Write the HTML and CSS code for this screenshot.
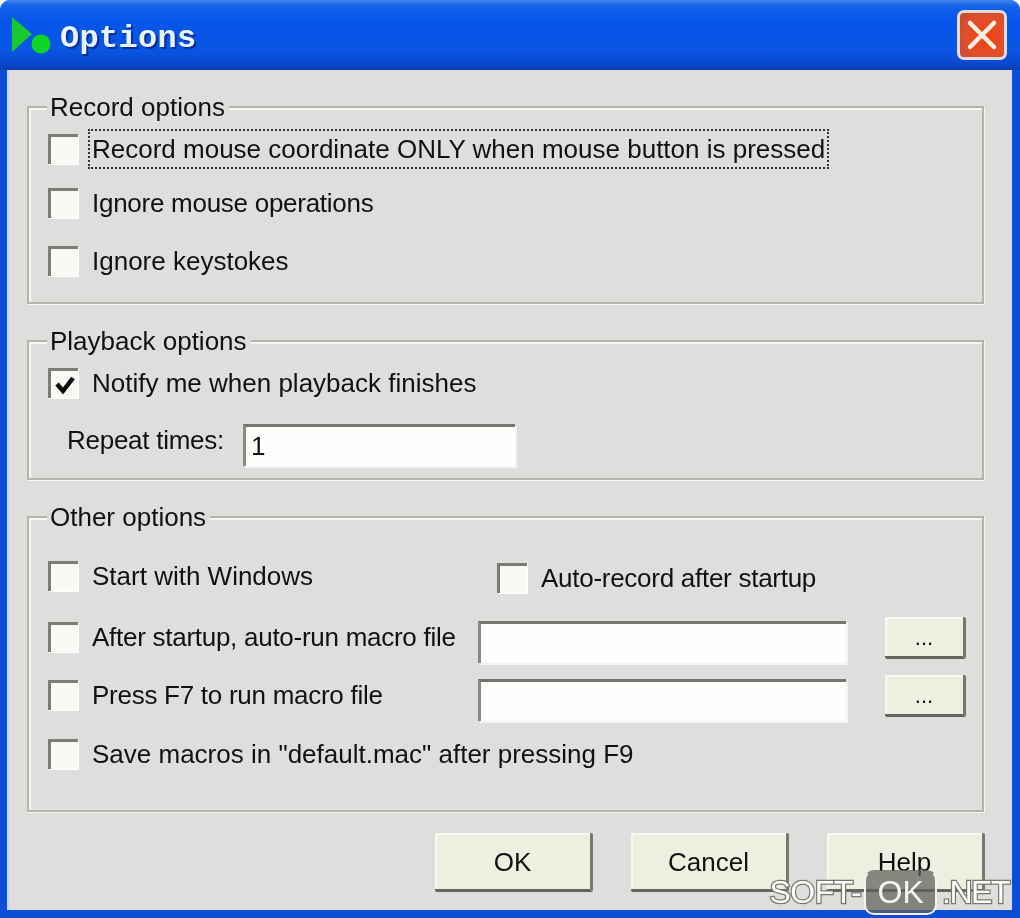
FILE: index.html
```html
<!DOCTYPE html>
<html lang="en">
<head>
  <meta charset="UTF-8">
  <title>Options</title>
  <link rel="stylesheet" href="styles.css">
</head>
<body>
  <div class="window">
    <div class="titlebar">
      <svg class="app-icon" width="40" height="40" viewBox="0 0 40 40">
        <polygon points="0,1 20,18 0,36" fill="#17c92c"/>
        <circle cx="29" cy="28" r="9.5" fill="#0fd625"/>
      </svg>
      <span class="title">Options</span>
      <div class="close">
        <svg width="34" height="34" viewBox="0 0 34 34">
          <path d="M5 5 L29 29 M29 5 L5 29" stroke="#fdeee4" stroke-width="4.5" stroke-linecap="round"/>
        </svg>
      </div>
    </div>

    <div class="client">
      <div class="group group-record">
        <div class="group-title">Record options</div>
        <div class="row">
          <span class="check"></span>
          <span class="label focused">Record mouse coordinate ONLY when mouse button is pressed</span>
        </div>
        <div class="row mt-14">
          <span class="check"></span>
          <span class="label tight">Ignore mouse operations</span>
        </div>
        <div class="row mt-18">
          <span class="check"></span>
          <span class="label">Ignore keystokes</span>
        </div>
      </div>

      <div class="group group-playback">
        <div class="group-title">Playback options</div>
        <div class="row">
          <span class="check">
            <svg width="24" height="24" viewBox="0 0 24 24">
              <path d="M4 11 L10 18 L20 5" fill="none" stroke="#0c0c0c" stroke-width="4.5"/>
            </svg>
          </span>
          <span class="label">Notify me when playback finishes</span>
        </div>
        <div class="row mt-17">
          <span class="label repeat-label tight">Repeat times:</span>
          <input class="field repeat-field" type="text" value="1">
        </div>
      </div>

      <div class="group group-other">
        <div class="group-title">Other options</div>
        <div class="row">
          <div class="cell-start">
            <span class="check"></span>
            <span class="label">Start with Windows</span>
          </div>
          <div class="cell-auto">
            <span class="check"></span>
            <span class="label tight">Auto-record after startup</span>
          </div>
        </div>
        <div class="row mt-21">
          <span class="check"></span>
          <span class="label file-label tight">After startup, auto-run macro file</span>
          <input class="field file-field" type="text">
          <button class="btn btn-small">...</button>
        </div>
        <div class="row mt-18">
          <span class="check"></span>
          <span class="label file-label tight">Press F7 to run macro file</span>
          <input class="field file-field" type="text">
          <button class="btn btn-small">...</button>
        </div>
        <div class="row mt-19">
          <span class="check"></span>
          <span class="label">Save macros in "default.mac" after pressing F9</span>
        </div>
      </div>

      <div class="actions">
        <button class="btn">OK</button>
        <button class="btn">Cancel</button>
        <button class="btn">Help</button>
      </div>
    </div>

    <div class="watermark">
      <span class="wm-text wm-soft">SOFT-</span><span class="wm-ok">OK</span><span class="wm-text wm-net">.NET</span>
    </div>
  </div>
</body>
</html>
```

FILE: styles.css
```css
html, body {
  margin: 0;
  padding: 0;
}
body {
  width: 1020px;
  height: 918px;
  overflow: hidden;
  font-family: "Liberation Sans", Arial, sans-serif;
  font-size: 26px;
  color: #111;
}
.window {
  position: relative;
  width: 1020px;
  height: 918px;
  background: #0b4fd6;
  border-radius: 10px 10px 0 0;
  overflow: hidden;
  filter: blur(0.6px);
}

/* title bar */
.titlebar {
  position: relative;
  height: 70px;
  box-sizing: border-box;
  padding: 0 13px 0 12px;
  display: flex;
  align-items: center;
  background: linear-gradient(#3f86ee 0, #1463e8 6px, #0656ea 20px, #0a55e4 50px, #0a4ad2 62px, #0b3fb4 70px);
}
.app-icon {
  flex: none;
  margin-top: 2px;
}
.title {
  margin: 6px 0 0 8px;
  font-family: "Liberation Mono", monospace;
  font-weight: bold;
  font-size: 32px;
  letter-spacing: 0.3px;
  color: #e8f6ff;
  text-shadow: 2px 2px 1px #0a2f90;
}
.close {
  margin: -1px 0 0 auto;
  width: 50px;
  height: 50px;
  box-sizing: border-box;
  display: flex;
  align-items: center;
  justify-content: center;
  border: 3px solid #e4dcdc;
  border-radius: 7px;
  background: radial-gradient(circle at 60% 55%, #f2400f 0, #e0502c 55%, #c9482f 100%);
}

/* client area */
.client {
  height: 840px;
  box-sizing: border-box;
  margin: 0 8px 0 7px;
  padding: 36px 28px 0 20px;
  background: #dedfdc;
  box-shadow: inset 2px 0 0 #c4d6ef, inset -2px 0 0 #d5dcea;
}
.group {
  position: relative;
  box-sizing: border-box;
  margin-bottom: 36px;
  padding-left: 19px;
  border: 2px solid #b4b4ad;
  box-shadow: inset 2px 2px 0 #f6f6f2, 1px 1px 0 #f6f6f2;
}
.group-record {
  height: 198px;
  padding-top: 21px;
}
.group-playback {
  height: 140px;
  padding-top: 21px;
}
.group-other {
  height: 296px;
  padding-top: 38px;
  margin-bottom: 21px;
}
.group-title {
  position: absolute;
  top: -17px;
  left: 18px;
  padding: 0 4px 0 3px;
  background: #dedfdc;
  line-height: 32px;
}

/* rows */
.row {
  display: flex;
  align-items: center;
  height: 40px;
}
.mt-14 { margin-top: 14px; }
.mt-17 { margin-top: 17px; }
.mt-18 { margin-top: 18px; }
.mt-19 { margin-top: 19px; }
.mt-21 { margin-top: 21px; }

.check {
  flex: none;
  width: 30px;
  height: 30px;
  box-sizing: border-box;
  display: flex;
  align-items: center;
  justify-content: center;
  border-top: 3px solid #7c7c76;
  border-left: 3px solid #7c7c76;
  background: #f9f9f6;
  box-shadow: 1px 1px 0 #fff;
}
.label {
  margin-left: 14px;
  white-space: nowrap;
}
.tight {
  letter-spacing: -0.27px;
}
.focused {
  outline: 2px dotted #333;
  outline-offset: 2px;
  line-height: 32px;
}
.repeat-label {
  width: 156px;
  margin-left: 19px;
}
.cell-start {
  display: flex;
  align-items: center;
  width: 449px;
}
.cell-auto {
  display: flex;
  align-items: center;
  margin-top: 4px;
}
.file-label {
  width: 386px;
}

/* inputs and buttons */
.field {
  box-sizing: border-box;
  height: 42px;
  margin: 9px 0 0;
  padding: 0 0 0 5px;
  border: 0;
  border-top: 3px solid #767670;
  border-left: 3px solid #8a8a84;
  border-radius: 0;
  background: #fefefc;
  box-shadow: 2px 2px 0 #f4f4f0;
  font: inherit;
  color: #111;
}
.repeat-field {
  width: 272px;
  margin-left: 20px;
}
.file-field {
  width: 368px;
}
.btn {
  box-sizing: border-box;
  width: 158px;
  height: 59px;
  padding: 2px 0 0;
  border: 0;
  border-right: 3px solid #77776f;
  border-bottom: 3px solid #66665f;
  border-radius: 2px;
  background: #eeeee1;
  box-shadow: inset 2px 2px 0 #f8f8f0;
  font: inherit;
  color: #111;
}
.btn-small {
  width: 81px;
  height: 42px;
  margin-left: 39px;
  margin-top: 2px;
  font-size: 22px;
}
.actions {
  display: flex;
  justify-content: flex-end;
  gap: 38px;
  margin-right: -1px;
}

/* watermark */
.watermark {
  position: absolute;
  right: 11px;
  bottom: 3px;
  display: flex;
  align-items: center;
  font-size: 32px;
}
.wm-text {
  color: #fff;
  -webkit-text-stroke: 2.5px #77776f;
  paint-order: stroke fill;
}
.wm-soft {
  letter-spacing: -0.5px;
}
.wm-net {
  letter-spacing: -1.5px;
}
.wm-ok {
  width: 73px;
  height: 45px;
  box-sizing: border-box;
  display: flex;
  align-items: center;
  justify-content: center;
  margin: 0 5px 0 3px;
  border: 2px solid #f2f2f2;
  border-top-color: transparent;
  border-radius: 10px;
  background: rgba(95, 95, 90, 0.72);
  color: #f4f4f4;
}
```
